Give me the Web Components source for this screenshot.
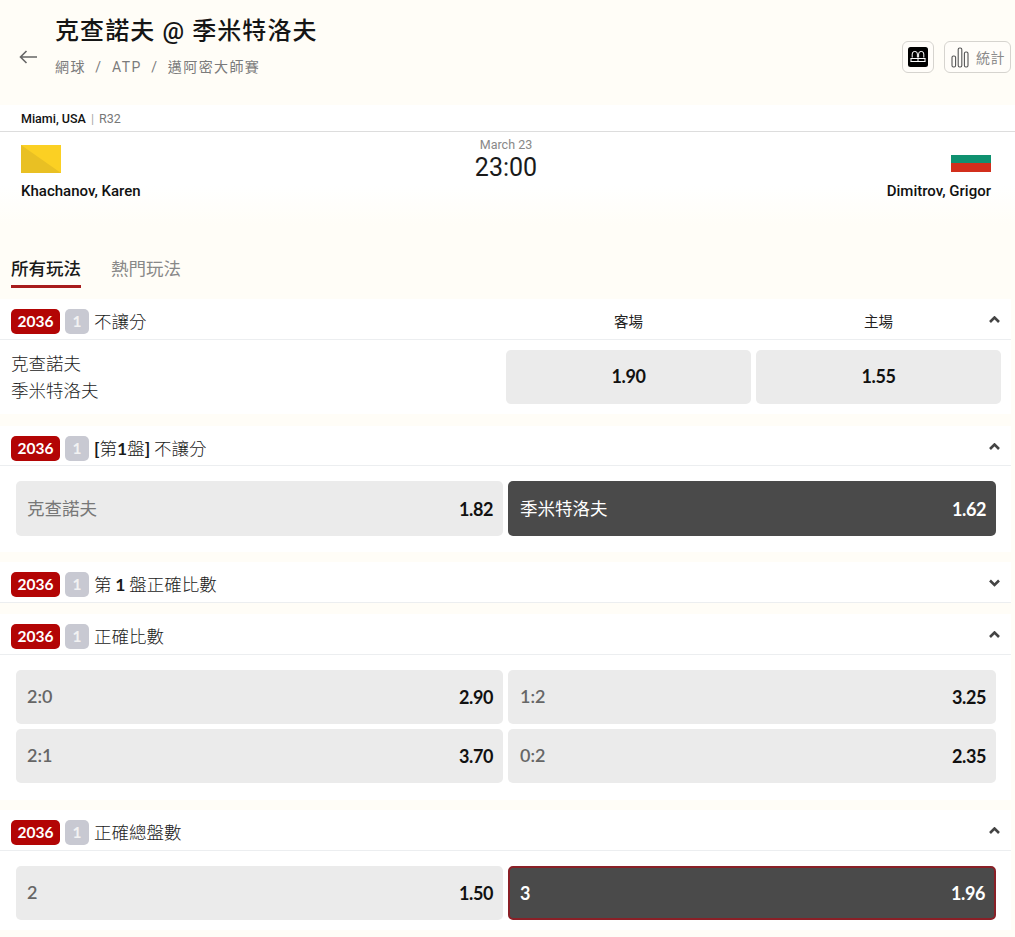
<!DOCTYPE html>
<html lang="zh-Hant">
<head>
<meta charset="utf-8">
<title>克查諾夫 @ 季米特洛夫</title>
<style>
  html, body { margin: 0; padding: 0; background: #fffdf7; }
  body { width: 1015px; height: 937px; overflow: hidden; font-family: Lato, "Noto Sans CJK TC", sans-serif; color: #111; }
</style>
</head>
<body>
<page-header></page-header>
<match-card></match-card>
<market-tabs></market-tabs>

<market-section title-html="不讓分" style="margin-top:11px;height:115px">
  <two-way-row></two-way-row>
</market-section>

<market-section title-html="<b>[</b>第<b>1</b>盤<b>]</b> 不讓分" style="margin-top:12px;height:126px;--head:40px;--btn:55px">
  <odds-grid>
    <odds-button label="克查諾夫" price="1.82"></odds-button>
    <odds-button label="季米特洛夫" price="1.62" selected></odds-button>
  </odds-grid>
</market-section>

<market-section title-html="第 <b>1</b> 盤正確比數" closed style="margin-top:10px;height:41px"></market-section>

<market-section title-html="正確比數" style="margin-top:11px;height:186px">
  <odds-grid>
    <odds-button label="2:0" price="2.90"></odds-button>
    <odds-button label="1:2" price="3.25"></odds-button>
    <odds-button label="2:1" price="3.70"></odds-button>
    <odds-button label="0:2" price="2.35"></odds-button>
  </odds-grid>
</market-section>

<market-section title-html="正確總盤數" style="margin-top:10px;height:120px">
  <odds-grid>
    <odds-button label="2" price="1.50"></odds-button>
    <odds-button label="3" price="1.96" selected outlined></odds-button>
  </odds-grid>
</market-section>

<script>
// Page header: back arrow, title, breadcrumb, tools
class PageHeader extends HTMLElement {
    constructor() {
        super();
        this.attachShadow({ mode: 'open' });
    }

    connectedCallback() {
        this.shadowRoot.innerHTML = `
            <style>
                :host { display: flex; height: 105px; box-sizing: border-box; padding: 0 4px 0 19px; align-items: flex-start; font-family: Roboto, "Noto Sans CJK TC", sans-serif; }
                .back { width: 18px; height: 14px; margin-top: 50px; flex: none; }
                .text { margin-left: 18px; padding-top: 15px; flex: 1; }
                h1 { margin: 0; font-size: 24px; line-height: 32px; font-weight: 500; letter-spacing: 1.1px; color: #151515; }
                .crumbs { margin-top: 10px; font-size: 14px; line-height: 20px; letter-spacing: 1.4px; color: #7b7b7b; }
                .crumbs i { font-style: normal; margin: 0 9.5px; }
                .tools { display: flex; gap: 10px; margin-top: 41px; }
                .tool { box-sizing: border-box; height: 32px; border: 1px solid #d6d4cf; border-radius: 6px; display: flex; align-items: center; justify-content: center; background: #fffdf9; }
                .sq { width: 32px; }
                .stats { width: 67px; gap: 7px; padding-left: 1px; font-size: 14px; letter-spacing: .6px; color: #8a8a8a; }
            </style>
            <svg class="back" viewBox="0 0 18 14" fill="none" stroke="#666" stroke-width="1.6"><path d="M18 7H1.5M7.5 1 1.5 7l6 6"/></svg>
            <div class="text">
                <h1>克查諾夫 @ 季米特洛夫</h1>
                <div class="crumbs">網球<i>/</i>ATP<i>/</i>邁阿密大師賽</div>
            </div>
            <div class="tools">
                <div class="tool sq">
                    <svg width="20" height="20" viewBox="0 0 20 20"><rect width="20" height="20" rx="2.5" fill="#000"/><g fill="none" stroke="#fff" stroke-width="1"><path d="M4.2 10.5V7a2.6 2.6 0 0 1 5.2 0v3.5M10.6 10.5V7a2.6 2.6 0 0 1 5.2 0v3.5"/><path d="M2.5 11.5h15M2.5 14.5h15M3 11.5v3M17 11.5v3M10 11.5v3"/></g></svg>
                </div>
                <div class="tool stats">
                    <svg width="18" height="21" viewBox="0 0 18 21" fill="none" stroke="#555" stroke-width="1.1"><rect x="1" y="9" width="3.6" height="11" rx="1.5"/><rect x="7.2" y="1" width="3.6" height="19" rx="1.5"/><rect x="13.4" y="5" width="3.6" height="15" rx="1.5"/></svg>
                    <span>統計</span>
                </div>
            </div>
        `;
    }
}

// Match information card
class MatchCard extends HTMLElement {
    constructor() {
        super();
        this.attachShadow({ mode: 'open' });
    }

    connectedCallback() {
        this.shadowRoot.innerHTML = `
            <style>
                :host { display: block; height: 120px; background: linear-gradient(#fff 0, #fff 80px, #fffdf7 120px); font-family: Roboto, "Noto Sans CJK TC", sans-serif; }
                .place { height: 27px; box-sizing: border-box; border-bottom: 1px solid #ddd; padding: 6px 0 0 21px; font-size: 12.5px; line-height: 15px; color: #777; }
                .place b { font-weight: 500; color: #111; }
                .place i { font-style: normal; margin: 0 5px; color: #aaa; }
                .teams { display: grid; grid-template-columns: 1fr 1fr 1fr; padding: 0 24px 0 21px; }
                .team { padding-top: 13px; }
                .team svg { display: block; }
                .name { margin-top: 10px; font-size: 15px; line-height: 17px; font-weight: 500; color: #111; }
                .away { text-align: right; }
                .away svg { margin-left: auto; }
                .time { text-align: center; padding-top: 5px; }
                .date { font-size: 12.5px; line-height: 15px; margin-bottom: 1px; color: #888; }
                .clock { font-size: 25px; line-height: 29px; color: #1a1a1a; }
            </style>
            <div class="place"><b>Miami, USA</b><i>|</i>R32</div>
            <div class="teams">
                <div class="team">
                    <svg width="40" height="28" viewBox="0 0 40 28"><rect width="40" height="28" fill="#fbd023"/><path d="M0 0 40 28H0z" fill="#e9c023"/></svg>
                    <div class="name">Khachanov, Karen</div>
                </div>
                <div class="time">
                    <div class="date">March 23</div>
                    <div class="clock">23:00</div>
                </div>
                <div class="team away">
                    <svg width="40" height="28" viewBox="0 0 40 28"><rect width="40" height="10" fill="#fff"/><rect y="10" width="40" height="8" fill="#0f9170"/><rect y="18" width="40" height="9" fill="#d22f1c"/></svg>
                    <div class="name">Dimitrov, Grigor</div>
                </div>
            </div>
        `;
    }
}

// Market filter tabs
class MarketTabs extends HTMLElement {
    constructor() {
        super();
        this.attachShadow({ mode: 'open' });
    }

    connectedCallback() {
        this.shadowRoot.innerHTML = `
            <style>
                :host { display: flex; gap: 30px; height: 63px; box-sizing: border-box; padding: 33px 0 0 11px; font-size: 17.5px; line-height: 22px; }
                .tab { height: 30px; box-sizing: border-box; color: #888; }
                .on { color: #1a1a1a; font-weight: 500; border-bottom: 3px solid #a81c1c; }
            </style>
            <div class="tab on">所有玩法</div>
            <div class="tab">熱門玩法</div>
        `;
    }
}

// One market block with its header and slotted body
class MarketSection extends HTMLElement {
    constructor() {
        super();
        this.attachShadow({ mode: 'open' });
    }

    connectedCallback() {
        const title = this.getAttribute('title-html') || '';
        const chevron = this.hasAttribute('closed') ? 'M1 1.5 5.5 6l4.5-4.5' : 'M1 6 5.5 1.5 10 6';
        const twoWay = title === '不讓分';

        this.shadowRoot.innerHTML = `
            <style>
                :host { display: block; width: 1011px; background: #fff; box-sizing: border-box; overflow: hidden; }
                .head { display: flex; align-items: flex-start; height: var(--head, 41px); box-sizing: border-box; border-bottom: 1px solid #eceef0; padding: 10px 11px 0; position: relative; }
                .code { background: #b30505; color: #fff; border-radius: 5px; width: 49px; height: 25px; font-size: 15.5px; font-weight: 700; line-height: 25px; text-align: center; }
                .num { background: #c8c9d2; color: #f2f2f2; border-radius: 5px; width: 24px; height: 25px; margin-left: 5px; font-size: 15.5px; font-weight: 700; line-height: 25px; text-align: center; }
                .title { margin-left: 5px; font-size: 17.5px; line-height: 25px; word-spacing: -1px; color: #1a1a1a; font-weight: 300; }
                .title b { font-weight: 700; }
                .cols { position: absolute; left: 506px; top: 0; width: 495px; display: flex; gap: 5px; line-height: 45px; font-size: 14.5px; text-align: center; color: #222; }
                .cols span { flex: 1; }
                svg { position: absolute; right: 11px; top: 17px; }
            </style>
            <div class="head">
                <span class="code">2036</span><span class="num">1</span>
                <span class="title">${title}</span>
                ${twoWay ? '<div class="cols"><span>客場</span><span>主場</span></div>' : ''}
                <svg width="11" height="8" viewBox="0 0 11 8" fill="none" stroke="#444" stroke-width="2.6"><path d="${chevron}"/></svg>
            </div>
            <slot></slot>
        `;
    }
}

// Team names and centred prices for the first market
class TwoWayRow extends HTMLElement {
    constructor() {
        super();
        this.attachShadow({ mode: 'open' });
    }

    connectedCallback() {
        this.shadowRoot.innerHTML = `
            <style>
                :host { display: flex; gap: 5px; padding: 10px 10px 0 11px; }
                .names { width: 490px; font-size: 17.5px; line-height: 27px; color: #1a1a1a; font-weight: 300; }
                .price { flex: 1; height: 54px; background: #ebebeb; border-radius: 5px; text-align: center; font-size: 18px; letter-spacing: -.4px; font-weight: 700; line-height: 53px; color: #111; }
            </style>
            <div class="names">克查諾夫<br>季米特洛夫</div>
            <div class="price">1.90</div>
            <div class="price">1.55</div>
        `;
    }
}

// Two-column grid of odds buttons
class OddsGrid extends HTMLElement {
    constructor() {
        super();
        this.attachShadow({ mode: 'open' });
    }

    connectedCallback() {
        this.shadowRoot.innerHTML = `
            <style>
                :host { display: grid; grid-template-columns: 487px 488px; gap: 5px; padding: 15px 0 0 16px; }
                ::slotted(:nth-child(even)) { --pad: 12px; }
            </style>
            <slot></slot>
        `;
    }
}

// Single selectable price
class OddsButton extends HTMLElement {
    constructor() {
        super();
        this.attachShadow({ mode: 'open' });
    }

    connectedCallback() {
        const label = this.getAttribute('label') || '';
        const price = this.getAttribute('price') || '';
        // score labels are set heavier than the names
        const heavy = /^[\x00-\x7f]+$/.test(label);

        this.shadowRoot.innerHTML = `
            <style>
                :host { display: flex; justify-content: space-between; align-items: center; box-sizing: border-box; height: var(--btn, 54px); padding: 0 10px 0 var(--pad, 11px); border-radius: 5px; background: #ebebeb; font-size: 17.5px; color: #777; }
                :host([selected]) { background: #4a4a4a; color: #fff; }
                :host([outlined]) { border: 2px solid #8a2027; padding: 0 9px 0 10px; }
                .label { margin-top: -3px; }
                .heavy { margin-top: -2px; font-size: 18px; font-weight: 600; color: #666; }
                :host([selected]) .heavy { margin-top: 0; font-weight: 700; color: #fff; }
                .price { font-size: 18px; letter-spacing: -.4px; font-weight: 700; color: #111; }
                :host([selected]) .price { color: #fff; }
            </style>
            <span class="label ${heavy ? 'heavy' : ''}">${label}</span>
            <span class="price">${price}</span>
        `;
    }
}

customElements.define('page-header', PageHeader);
customElements.define('match-card', MatchCard);
customElements.define('market-tabs', MarketTabs);
customElements.define('market-section', MarketSection);
customElements.define('two-way-row', TwoWayRow);
customElements.define('odds-grid', OddsGrid);
customElements.define('odds-button', OddsButton);
</script>
</body>
</html>
